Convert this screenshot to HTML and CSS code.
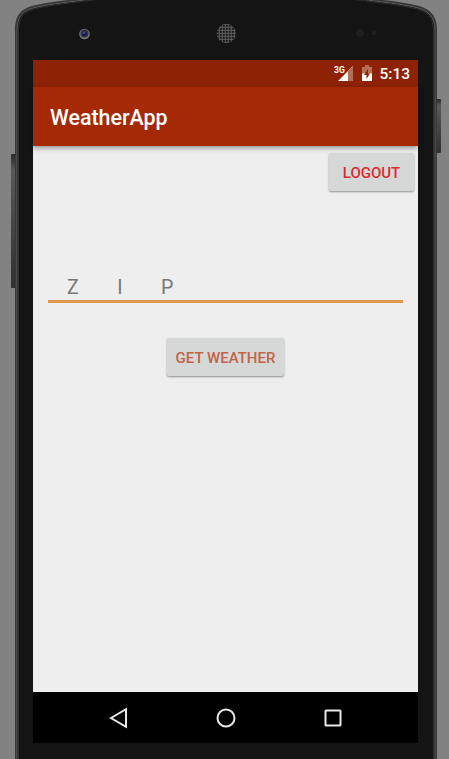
FILE: index.html
```html
<!DOCTYPE html>
<html lang="en">
<head>
<meta charset="utf-8">
<title>WeatherApp</title>
<link rel="stylesheet" href="styles.css">
</head>
<body>
<div class="device">
  <svg class="shell" width="449" height="759" viewBox="0 0 449 759" aria-hidden="true">
    <defs>
      <linearGradient id="key" x1="0" y1="0" x2="0" y2="1">
        <stop offset="0" stop-color="#292929"/><stop offset=".12" stop-color="#595959"/><stop offset="1" stop-color="#303030"/>
      </linearGradient>
      <pattern id="mesh" width="3" height="3" patternUnits="userSpaceOnUse">
        <rect width="3" height="3" fill="#606060"/><rect x=".8" y=".8" width="2" height="2" fill="#171717"/>
      </pattern>
    </defs>
    <rect x="11" y="154" width="5" height="134" rx="1" fill="url(#key)"/>
    <rect x="436" y="99" width="5" height="54" rx="1" fill="url(#key)"/>
    <path d="M15 765V30C15 14 22 8 36 5C55 1 78-1 105-4H347C373-1 397 1 415 5C429 8 437 14 437 30V765Z" fill="#363738"/>
    <path d="M17 765V31C17 16 23 10 37 7C56 3 79 1 106-3H346C372 1 396 3 414 7C428 10 435 16 435 31V765Z" fill="#141414" stroke="#5c5d60"/>
    <path d="M18.500 765V31C18.500 17 24 11 38 8C57 4 80 2 107-2H345C371 2 395 4 413 8C427 11 433.500 17 433.500 31V765Z" fill="#141414" stroke="#303134"/>
    <circle cx="84.500" cy="34" r="5.300" fill="#777"/><circle cx="84.500" cy="33.500" r="4" fill="#333342"/>
    <circle cx="84.300" cy="34" r="2.200" fill="#15156a"/><circle cx="84" cy="33" r=".8" fill="#8585bd"/>
    <circle cx="226.300" cy="33.500" r="9.700" fill="url(#mesh)"/>
    <circle cx="360" cy="33" r="4" fill="#1f1d1d"/><circle cx="374" cy="33" r="2.500" fill="#201e1e"/>
  </svg>
  <main class="screen">
    <div class="status">
      <svg width="48" height="20" viewBox="0 0 48 20" aria-label="3G, battery charging">
        <text class="network" x="0" y="8">3G</text>
        <path d="M4 16 19 1V16Z" fill="#fff"/><path d="M14 6 19 1V16H14Z" fill="#b76e59"/>
        <path d="M28 2H31V0H35V2H38V16H28Z" fill="#b76e59"/><path d="M28 8.500H38V16H28Z" fill="#fff"/>
        <path d="M34 4 30 10H32.500V14L36 8.500H34Z" fill="#8e2204"/>
      </svg>
      <span class="time">5:13</span>
    </div>
    <header class="appbar">WeatherApp</header>
    <section class="content">
      <button class="button logout">LOGOUT</button>
      <div class="field">ZIP</div>
      <button class="button weather">GET WEATHER</button>
    </section>
    <nav class="navigation">
      <svg viewBox="0 0 24 24"><path d="M4 12 19 3.200V20.800Z"/></svg>
      <svg viewBox="0 0 24 24"><circle cx="12" cy="12" r="8.500"/></svg>
      <svg viewBox="0 0 24 24"><rect x="4.500" y="4.500" width="15" height="15" rx=".5"/></svg>
    </nav>
  </main>
</div>
</body>
</html>
```
FILE: styles.css
```css
* { box-sizing: border-box; }
body { margin: 0; overflow: hidden; background: #828282; font-family: Roboto, sans-serif; }
.device { position: relative; width: 449px; height: 759px; padding: 60px 31px 16px 33px; }
.shell { position: absolute; inset: 0; }
.screen { position: relative; display: flex; flex-direction: column; width: 385px; height: 683px; background: #eee; }
.status { height: 27px; flex: none; display: flex; justify-content: flex-end; align-items: center; padding-right: 8px; color: #fff; background: #8e2204; }
.status svg { margin: 3px -3px 0 0; }
.network { font-size: 8.500px; font-weight: 700; fill: #fff; }
.time { font-size: 15.500px; font-weight: 500; line-height: 27px; padding-top: 1px; }
.appbar { height: 59px; flex: none; padding: 1px 17px 0; line-height: 59px; font-size: 21.400px; font-weight: 500; color: #fff; background: #a62905; box-shadow: 0 2px 5px #0006; z-index: 1; }
.content { flex: 1; display: flex; flex-direction: column; align-items: center; min-height: 0; }
.button { border: 0; border-radius: 2px; padding: 1px 0 0; height: 38px; flex: none; background: #d6d8d7; box-shadow: 0 1px 2px #0006; font: 500 15px/38px Roboto, sans-serif; }
.logout { width: 85px; align-self: flex-end; margin: 7px 4px 0 0; color: #dc2b31; }
.field { width: 355px; height: 36px; margin-top: 76px; padding-left: 19px; border-bottom: 3px solid #e1974d; color: #777; font-size: 19.500px; line-height: 41px; letter-spacing: 38.500px; }
.weather { width: 117px; margin-top: 35px; color: #c06348; }
.navigation { height: 51px; flex: none; display: flex; justify-content: center; gap: 83px; align-items: center; background: #000; }
.navigation svg { width: 24px; height: 24px; fill: none; stroke: #e8e8e8; stroke-width: 2; }
```
